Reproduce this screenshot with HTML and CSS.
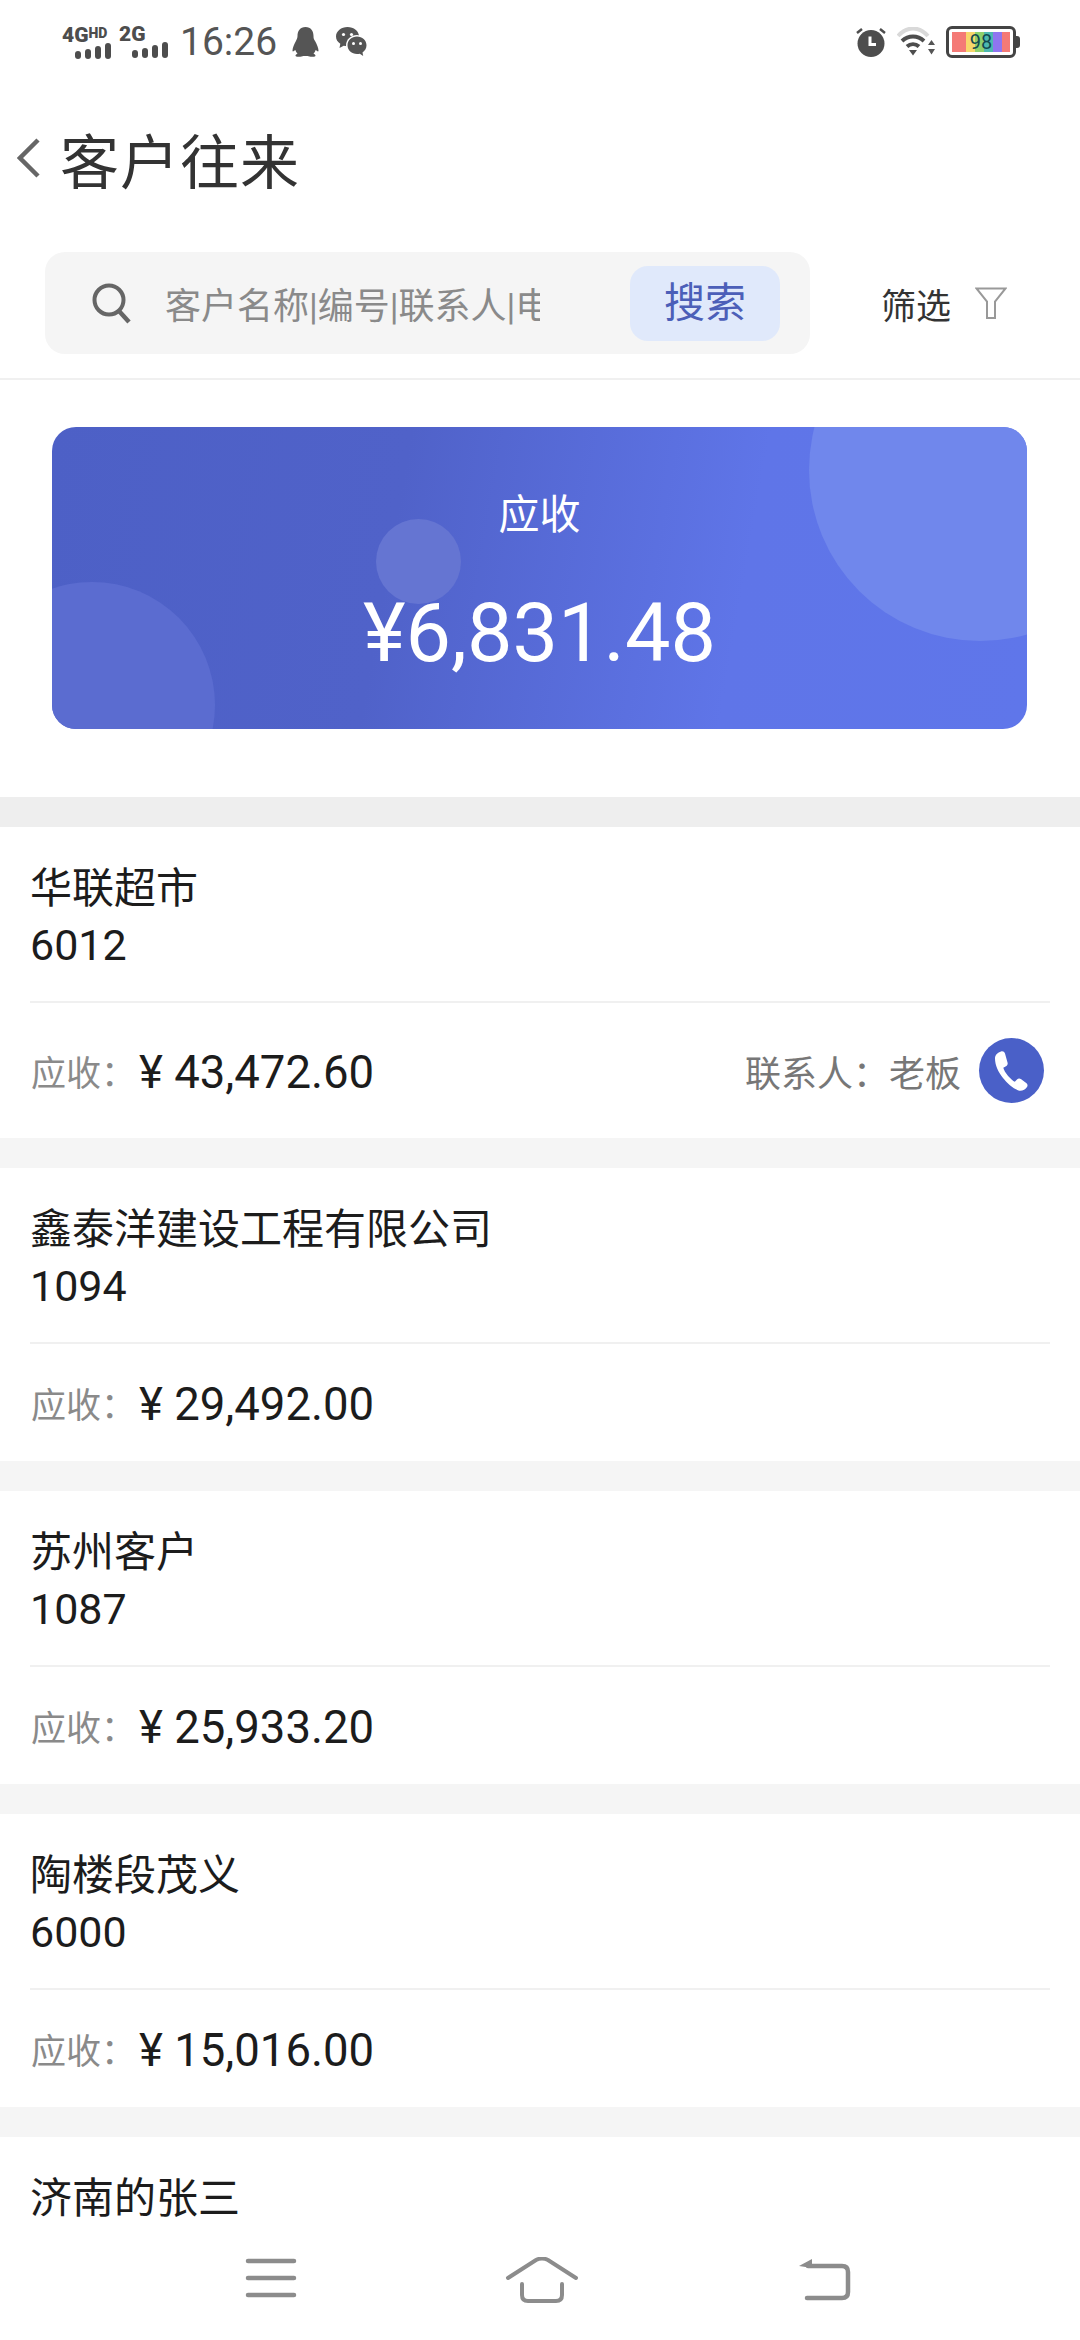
FILE: index.html
```html
<!DOCTYPE html>
<html lang="zh-CN">
<head>
  <meta charset="UTF-8" />
  <title>客户往来</title>
  <link rel="stylesheet" href="styles.css">
</head>
<body>
  <div class="page">

    <!-- Status bar -->
    <div class="status-bar">
      <div class="status-left">
        <div class="signal signal-first">
          <span class="signal-label">4G<small>HD</small></span>
          <svg class="signal-bars" width="36" height="16" viewBox="0 0 36 16"><rect x="0" y="8" width="6" height="8" rx="3"/><rect x="10" y="6" width="6" height="10" rx="3"/><rect x="20" y="3" width="6" height="13" rx="3"/><rect x="30" y="0" width="6" height="16" rx="3"/></svg>
        </div>
        <div class="signal signal-second">
          <span class="signal-label">2G</span>
          <svg class="signal-bars" width="36" height="16" viewBox="0 0 36 16"><rect x="0" y="8" width="6" height="8" rx="3"/><rect x="10" y="6" width="6" height="10" rx="3"/><rect x="20" y="3" width="6" height="13" rx="3"/><rect x="30" y="0" width="6" height="16" rx="3"/></svg>
        </div>
        <span class="clock">16:26</span>
        <svg class="qq-icon" width="27" height="30" viewBox="0 0 27 30"><path fill="#555" d="M13.5 0C8 0 5.5 4 5.5 9c0 2-.6 3.2-1.7 5.2C2.300 17 0.500 21 0.500 23.500c0 1.300.8 1.200 2.800-.5.5 1.500 1.200 2.800 2.200 3.800C3.800 27.500 3 28.300 3.800 29.200c1 .8 6 .8 7.500-.2h4.400c1.500 1 6.500 1 7.500.2.800-.9 0-1.700-1.700-2.400 1-1 1.700-2.300 2.200-3.800 2 1.700 2.800 1.800 2.800.5 0-2.500-1.800-6.500-3.300-9.300C21.600 12.200 21.500 11 21.500 9c0-5-2.500-9-8-9z"/></svg>
        <svg class="wechat-icon" width="31" height="30" viewBox="0 0 31 30">
          <path fill="#555" d="M11.500 0C5.200 0 0 4.200 0 9.500c0 3 1.700 5.600 4.300 7.300L3.500 21l4.200-2.300c1.100.3 2.400.5 3.800.5 6.300 0 11.500-4.200 11.500-9.700S17.800 0 11.500 0z"/>
          <circle cx="7.500" cy="7.500" r="1.600" fill="#fff"/><circle cx="15.500" cy="7.500" r="1.600" fill="#fff"/>
          <ellipse cx="21" cy="18.500" rx="11" ry="10.500" fill="#fff"/>
          <path fill="#555" d="M21 9.500c-5.300 0-9.500 3.900-9.500 8.800s4.200 8.800 9.500 8.800c1 0 1.900-.1 2.800-.4l3.400 2.300-.7-3.500c2.400-1.600 4-4.200 4-7.200 0-4.900-4.300-8.800-9.500-8.800z"/>
          <circle cx="17.500" cy="16.500" r="1.500" fill="#fff"/><circle cx="24.500" cy="16.500" r="1.500" fill="#fff"/>
        </svg>
      </div>
      <div class="status-right">
        <svg width="30" height="30" viewBox="0 0 30 30">
          <circle cx="15" cy="16.500" r="13.500" fill="#4d4d4d"/>
          <path d="M14 9.500v8h6" fill="none" stroke="#fff" stroke-width="3"/>
          <path d="M1 6l5-4M29 6l-5-4" stroke="#4d4d4d" stroke-width="2.500" fill="none"/>
        </svg>
        <svg class="wifi-icon" width="38" height="30" viewBox="0 0 38 30">
          <path d="M1 9C10 -1 22 -1 31 9" fill="none" stroke="#d9d9d9" stroke-width="4"/>
          <path d="M5 14c6.500-6 15.500-6 22 0" fill="none" stroke="#4d4d4d" stroke-width="4"/>
          <path d="M10 19.500c3.500-3 8.500-3 12 0" fill="none" stroke="#4d4d4d" stroke-width="4"/>
          <path d="M12 23h8l-4 5.500z" fill="#4d4d4d"/>
          <path d="M31 18l3.500-5 3.500 5zM31 22h7l-3.500 5.500z" fill="#555"/>
        </svg>
        <div class="battery">
          <div class="battery-body"><span class="battery-level">98</span></div>
          <div class="battery-tip"></div>
        </div>
      </div>
    </div>

    <!-- Title -->
    <header class="title-bar">
      <svg class="back-icon" width="24" height="40" viewBox="0 0 24 40"><path d="M21 2L3 20l18 18" fill="none" stroke="#666" stroke-width="4.500"/></svg>
      <h1 class="page-title">客户往来</h1>
    </header>

    <!-- Search -->
    <div class="search-row">
      <div class="search-box">
        <svg class="search-icon" width="42" height="42" viewBox="0 0 42 42"><circle cx="18" cy="18" r="14.500" fill="none" stroke="#666" stroke-width="4"/><path d="M28 29l10 11" stroke="#666" stroke-width="4.500" fill="none"/></svg>
        <div class="search-placeholder">客户名称|编号|联系人|电话</div>
        <div class="search-btn">搜索</div>
      </div>
      <div class="filter">
        <span>筛选</span>
        <svg width="32" height="32" viewBox="0 0 32 32"><path d="M1.500 1.500h29L20 14.500V31h-8V14.500zM3 7.500" fill="none" stroke="#999" stroke-width="2"/></svg>
      </div>
    </div>

    <!-- Summary card -->
    <section class="summary">
      <div class="summary-card">
        <div class="bubble bubble-large"></div>
        <div class="bubble bubble-small"></div>
        <div class="bubble bubble-corner"></div>
        <div class="summary-label">应收</div>
        <div class="summary-amount">¥6,831.48</div>
      </div>
    </section>

    <!-- Customer list -->
    <div class="customer-list">
      <div class="customer">
        <div class="customer-info">
          <div>华联超市</div>
          <div class="customer-code">6012</div>
        </div>
        <div class="customer-foot customer-foot-tall">
          <div class="receivable"><span class="muted">应收：</span><span class="money">¥ 43,472.60</span></div>
          <div class="contact">
            <span>联系人：</span><span>老板</span>
            <div class="call-btn">
              <svg width="40" height="42" viewBox="0 0 40 42"><path fill="#fff" d="M9 1.500c-3.200 1-6 3.500-6 7 0 7 3.500 14 8 19.500 4 5 10 10.500 15.500 12.500 3 1 7-1 8.500-3.500 1-1.500.5-3-.8-4l-5-3.700c-1.500-1-3-1-4.200.3l-2.200 2.200c-3.500-1.500-10.500-9.500-11.500-14l2.700-1.500c1.500-.8 2-2.300 1.500-3.800L13 3.500C12.300 1.700 10.800 1 9 1.500z"/></svg>
            </div>
          </div>
        </div>
      </div>

      <div class="customer">
        <div class="customer-info">
          <div>鑫泰洋建设工程有限公司</div>
          <div class="customer-code">1094</div>
        </div>
        <div class="customer-foot">
          <div class="receivable"><span class="muted">应收：</span><span class="money">¥ 29,492.00</span></div>
        </div>
      </div>

      <div class="customer">
        <div class="customer-info">
          <div>苏州客户</div>
          <div class="customer-code">1087</div>
        </div>
        <div class="customer-foot">
          <div class="receivable"><span class="muted">应收：</span><span class="money">¥ 25,933.20</span></div>
        </div>
      </div>

      <div class="customer">
        <div class="customer-info">
          <div>陶楼段茂义</div>
          <div class="customer-code">6000</div>
        </div>
        <div class="customer-foot">
          <div class="receivable"><span class="muted">应收：</span><span class="money">¥ 15,016.00</span></div>
        </div>
      </div>

      <div class="customer">
        <div class="customer-info">
          <div>济南的张三</div>
        </div>
      </div>
    </div>

    <!-- System navigation -->
    <nav class="sys-nav">
      <svg width="54" height="42" viewBox="0 0 54 42"><path d="M4 4h46M4 21h46M4 38h46" stroke="#8c8c8c" stroke-width="4.500" stroke-linecap="round" fill="none"/></svg>
      <svg width="74" height="46" viewBox="0 0 74 46"><path d="M3 21L31 3q6-3 12 0l28 18M17 27v11q0 6 6 6h28q6 0 6-6V27" stroke="#8c8c8c" stroke-width="4" stroke-linecap="round" fill="none"/></svg>
      <svg class="nav-back" width="54" height="46" viewBox="0 0 54 46"><path d="M11 9h34q6 0 6 6v20q0 6-6 6H10" stroke="#8c8c8c" stroke-width="4.500" stroke-linecap="round" fill="none"/><path d="M2 9l13-7v9z" fill="#8c8c8c"/></svg>
    </nav>
  </div>
</body>
</html>
```

FILE: styles.css
```css
* { box-sizing: border-box; margin: 0; padding: 0; }
html, body {
  height: 100%;
  background: #fff;
  font-family: Roboto, 'Noto Sans CJK SC', sans-serif;
}

.page {
  width: 1080px;
  height: 2340px;
  display: flex;
  flex-direction: column;
  overflow: hidden;
}

/* STATUS BAR */
.status-bar {
  height: 80px;
  flex: none;
  display: flex;
  justify-content: space-between;
  align-items: flex-start;
  padding: 26px 60px 0 62px;
}

.status-left, .status-right {
  display: flex;
  align-items: center;
}

.status-left { height: 32px; }
.status-right { gap: 11px; height: 32px; }

.signal {
  width: 49px;
  display: flex;
  flex-direction: column;
  align-items: flex-end;
  color: #4d4d4d;
}

.signal-second { margin-left: 8px; }

.signal-label {
  align-self: flex-start;
  font-size: 21px;
  line-height: 15px;
  font-weight: 900;
  white-space: nowrap;
}

.signal-label small { font-size: 14px; vertical-align: 4px; }
.signal-bars { fill: #4d4d4d; }

.clock {
  margin-left: 12px;
  font-size: 39px;
  line-height: 32px;
  color: #555;
}

.qq-icon { margin-left: 15px; }
.wechat-icon { margin-left: 17px; }

.battery {
  display: flex;
  align-items: center;
}

.battery-body {
  width: 70px;
  height: 32px;
  padding: 3px;
  border: 3px solid #444;
  border-radius: 6px;
}

.battery-level {
  display: block;
  height: 100%;
  font-size: 20px;
  line-height: 20px;
  text-align: center;
  color: #124a50;
  background: linear-gradient(90deg, #f47a76 0 25%, #f7d76b 25% 39%, #8fd06c 39% 55%, #4db8b0 55% 70%, #8f75f0 70% 87%, #f47a76 87%);
}

.battery-tip {
  width: 4px;
  height: 12px;
  background: #444;
  border-radius: 0 3px 3px 0;
}

/* TITLE */
.title-bar {
  height: 156px;
  flex: none;
  display: flex;
  align-items: center;
  padding-left: 17px;
}

.page-title {
  margin-left: 19px;
  font-size: 59px;
  font-weight: 400;
  color: #333;
  letter-spacing: 1px;
}

/* SEARCH */
.search-row {
  flex: none;
  display: flex;
  align-items: center;
  height: 144px;
  padding: 16px 0 24px 45px;
  border-bottom: 2px solid #f0f0f0;
}

.search-box {
  width: 765px;
  height: 102px;
  display: flex;
  align-items: center;
  padding-left: 46px;
  background: #f5f5f5;
  border-radius: 20px;
}

.search-placeholder {
  width: 375px;
  margin-left: 32px;
  font-size: 36px;
  white-space: nowrap;
  overflow: hidden;
  color: #8a8a8a;
}

.search-btn {
  width: 150px;
  height: 75px;
  margin-left: 90px;
  background: #e0e9fb;
  border-radius: 18px;
  font-size: 41px;
  line-height: 75px;
  text-align: center;
  color: #4c5fb8;
}

.filter {
  display: flex;
  align-items: center;
  gap: 24px;
  margin-left: 71px;
  font-size: 35px;
  color: #333;
}

/* SUMMARY */
.summary {
  flex: none;
  padding: 47px 53px 68px 52px;
  border-bottom: 30px solid #eee;
}

.summary-card {
  position: relative;
  height: 302px;
  padding-top: 60px;
  overflow: hidden;
  border-radius: 24px;
  background: linear-gradient(100deg, #4d60c6 0%, #5062c9 35%, #5f75e8 70%, #5f76ea 100%);
  color: #fff;
  text-align: center;
}

.bubble {
  position: absolute;
  border-radius: 50%;
}

.bubble-large {
  width: 342px;
  height: 342px;
  left: 757px;
  top: -128px;
  background: #7087ec;
}

.bubble-small {
  width: 85px;
  height: 85px;
  left: 324px;
  top: 92px;
  background: #6575d2;
}

.bubble-corner {
  width: 246px;
  height: 246px;
  left: -83px;
  top: 155px;
  background: #5b6cd0;
}

.summary-label, .summary-amount { position: relative; }

.summary-label {
  font-size: 41px;
  line-height: 56px;
}

.summary-amount {
  margin-top: 43px;
  font-size: 81px;
  line-height: 96px;
}

/* CUSTOMER LIST */
.customer-list {
  flex: 1;
  min-height: 0;
  overflow: hidden;
  display: flex;
  flex-direction: column;
  gap: 30px;
  background: #f5f5f5;
}

.customer { background: #fff; flex: none; }

.customer-info {
  height: 174px;
  padding: 33px 32px 0 30px;
  font-size: 42px;
  line-height: 57px;
  color: #1c1c1c;
}

.customer-code { font-size: 43px; }

.customer-foot {
  height: 119px;
  margin: 0 30px;
  padding: 0 6px 0 1px;
  display: flex;
  justify-content: space-between;
  align-items: center;
  border-top: 2px solid #f0f0f0;
}

.customer-foot-tall { height: 137px; }

.receivable {
  display: flex;
  align-items: center;
}

.muted {
  width: 108px;
  font-size: 35px;
  color: #8a8a8a;
}

.money {
  margin-top: 3px;
  font-size: 45.5px;
  color: #1c1c1c;
}

.contact {
  display: flex;
  align-items: center;
  font-size: 36px;
  color: #777;
}

.call-btn {
  width: 65px;
  height: 65px;
  margin-left: 18px;
  display: flex;
  align-items: center;
  justify-content: center;
  background: #4a60c8;
  border-radius: 50%;
}

/* SYSTEM NAV */
.sys-nav {
  height: 115px;
  flex: none;
  display: flex;
  align-items: flex-start;
  justify-content: space-between;
  padding: 32px 229px 0 244px;
  background: #fff;
}

.nav-back { margin-left: 12px; }
```
